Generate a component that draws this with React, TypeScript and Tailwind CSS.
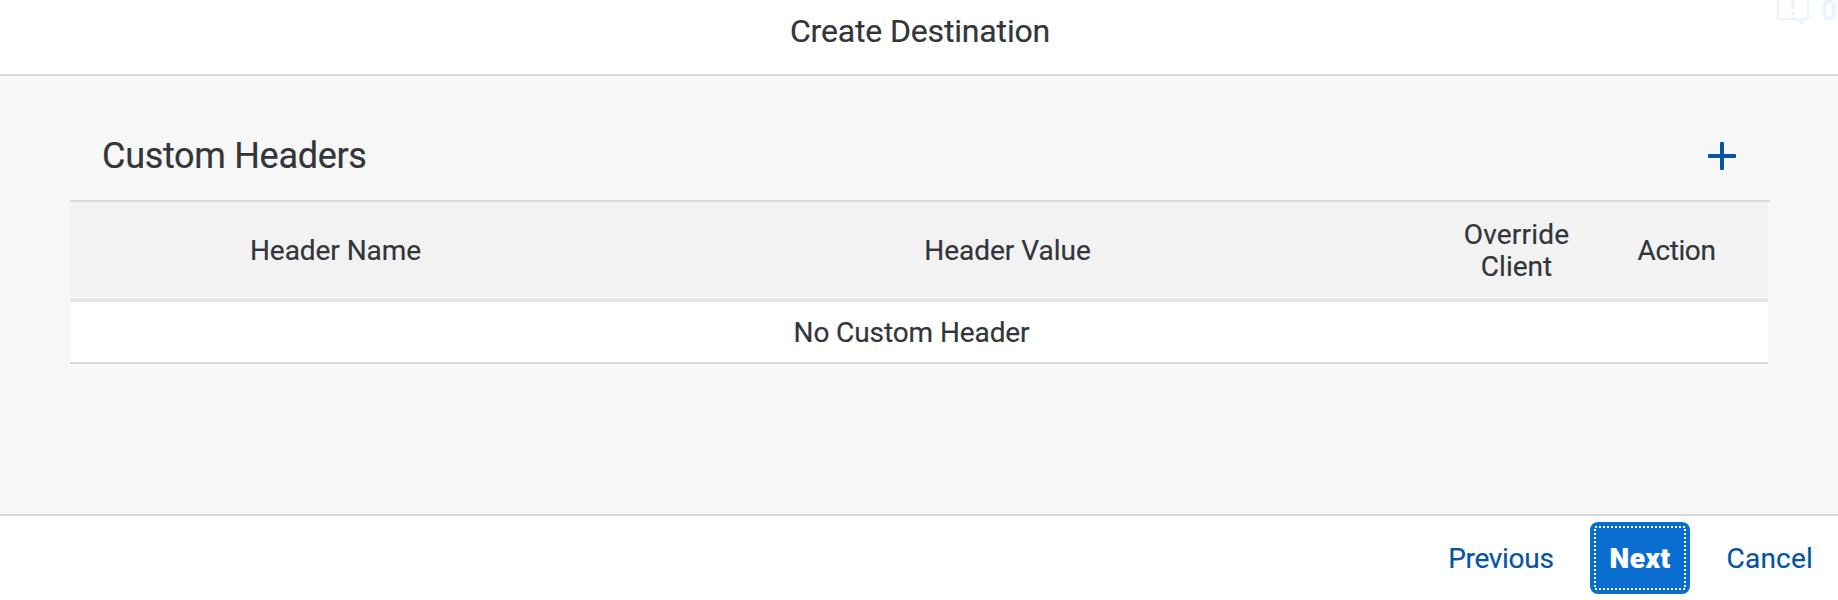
function MessageCount() {
  return (
    <div className="absolute right-0 top-0 h-[30px] w-[62px] text-[#e8f3ff]">
      <svg className="absolute left-0 top-0" width="34" height="28" viewBox="0 0 34 28" fill="none">
        <path
          d="M2 -4V16.500Q2 19 4.500 19H21.500L26 24V19H29.500Q32 19 32 16.500V-4"
          stroke="currentColor"
          strokeWidth="2.200"
          strokeLinejoin="round"
        />
        <path d="M15 -2H19L18 9H16Z" fill="currentColor" />
        <circle cx="17" cy="13" r="2" fill="currentColor" />
      </svg>
      <span className="absolute left-[45px] top-0 text-[28px] font-medium leading-[21px]">0</span>
    </div>
  );
}

function AddButton() {
  return (
    <button aria-label="Add" className="flex size-7 items-center justify-center text-[#0854a0]">
      <svg width="28" height="28" viewBox="0 0 28 28" fill="currentColor">
        <rect x="12" y="0" width="4" height="28" rx="1" />
        <rect x="0" y="12" width="28" height="4" rx="1" />
      </svg>
    </button>
  );
}

function NextButton() {
  return (
    <button className="flex h-[72px] w-[100px] rounded-[8px] bg-[#0a6ed1] p-[4px] text-white">
      <span className="relative flex h-full w-full items-center justify-center pl-px pt-px font-black tracking-[0.5px]">
        <svg className="absolute inset-0" width="92" height="64" viewBox="0 0 92 64" fill="none">
          <rect x="1" y="1" width="90" height="62" stroke="white" strokeWidth="2" strokeDasharray="2 2" />
        </svg>
        Next
      </span>
    </button>
  );
}

export default function App() {
  return (
    <div className="relative flex h-[600px] w-full flex-col overflow-hidden bg-[#f7f7f7] font-['Roboto',sans-serif] text-[28px] leading-[32px] text-[#32363a] [-webkit-text-stroke:0.2px]">
      <header className="flex h-[76px] shrink-0 justify-center border-b-2 border-[#d9d9d9] bg-white pl-[2px] pt-[12px]">
        <h1 className="text-[32px] leading-[38px] tracking-[-0.16px]">Create Destination</h1>
      </header>
      <MessageCount />

      <main className="flex-1 pl-[70px] pr-[68px] pt-[48px]">
        <div className="flex h-[76px] items-start justify-between pl-[32px] pr-[34px]">
          <h2 className="pt-[11px] text-[36px] leading-[42px] tracking-[-0.3px]">Custom Headers</h2>
          <div className="pt-[18px]">
            <AddButton />
          </div>
        </div>
        <div className="h-[2px] bg-[#d9d9d9]" />
        <div className="mr-[2px] border-b-2 border-[#d9d9d9] bg-white">
          <div className="grid h-[95px] grid-cols-[531px_813px_205px_149px] items-center bg-[#f2f2f2] pt-[3px] text-center">
            <div className="tracking-[-0.05px]">Header Name</div>
            <div>Header Value</div>
            <div>
              <div className="tracking-[0.2px]">Override</div>
              <div>Client</div>
            </div>
            <div className="pr-[34px] tracking-[-0.4px]">Action</div>
          </div>
          <div className="mt-px h-[4px] bg-[#e5e5e5]" />
          <div className="flex h-[60px] items-center justify-center pr-[15px] pt-[2px] tracking-[-0.1px]">No Custom Header</div>
        </div>
      </main>

      <footer className="flex h-[86px] shrink-0 items-start justify-end border-t-2 border-[#d9d9d9] bg-white pr-[25px] pt-[6px] text-[#0854a0]">
        <button className="mr-[36px] h-[72px] pt-px tracking-[-0.3px]">Previous</button>
        <NextButton />
        <button className="ml-[37px] h-[72px] pt-px tracking-[0.2px]">Cancel</button>
      </footer>
    </div>
  );
}
